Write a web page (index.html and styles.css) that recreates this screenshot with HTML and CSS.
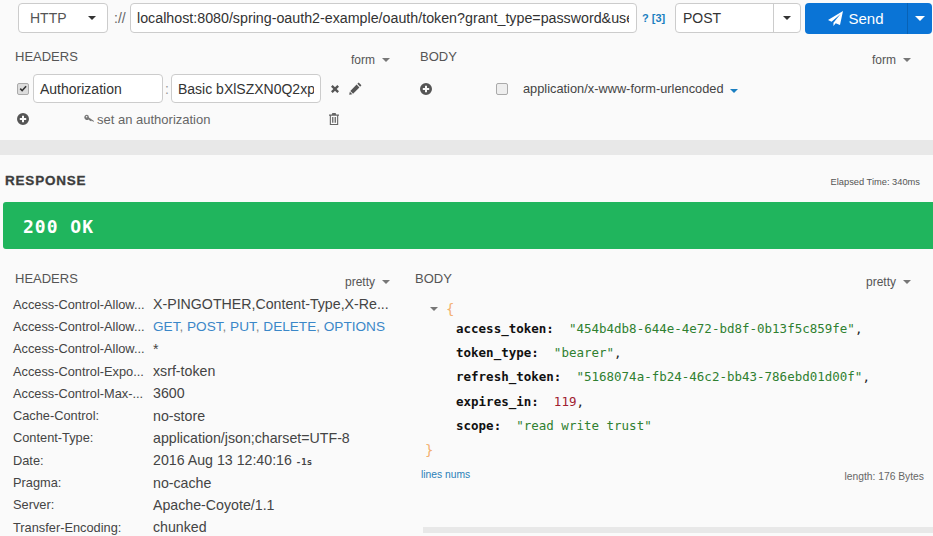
FILE: index.html
```html
<!DOCTYPE html>
<html lang="en">
  <head>
    <meta charset="UTF-8" />
    <meta name="viewport" content="width=device-width, initial-scale=1.0" />
    <title>REST Client</title>
    <link rel="stylesheet" href="styles.css">
  </head>
  <body>
    <section class="request">
      <div class="url-row">
        <div class="field scheme-select">HTTP<span class="caret caret-dark"></span></div>
        <span class="scheme-sep">://</span>
        <div class="field url-input"><span class="clip-text">localhost:8080/spring-oauth2-example/oauth/token?grant_type=password&amp;use</span></div>
        <a class="url-help">? [3]</a>
        <div class="field method-select">
          <span class="method-name">POST</span>
          <span class="method-toggle"><span class="caret caret-dark"></span></span>
        </div>
        <div class="send-button">
          <span class="send-main">
            <svg class="send-icon" viewBox="0 0 16 16"><path d="M16 0 12.8 15 8.2 13 5.8 16V12.6L13.4 3.2 3.8 11.4 0 9.6Z" /></svg>
            Send
          </span>
          <span class="send-toggle"><span class="caret caret-white"></span></span>
        </div>
      </div>

      <div class="request-panels">
        <div class="request-headers">
          <div class="panel-title">
            <h3 class="panel-heading">HEADERS</h3>
            <span class="panel-mode">form<span class="caret caret-gray"></span></span>
          </div>
          <div class="header-row">
            <span class="checkbox">
              <svg viewBox="0 0 12 12"><path d="M2 6.2 3.4 4.8 5 6.5 9 2 10.4 3.4 5 9.4Z" /></svg>
            </span>
            <div class="field header-name">Authorization</div>
            <span class="header-colon">:</span>
            <div class="field header-value"><span class="clip-text">Basic bXlSZXN0Q2xp</span></div>
            <svg class="icon icon-remove" viewBox="0 0 12 12"><path d="M3.2 1.2 6 4 8.8 1.2 10.8 3.2 8 6 10.8 8.8 8.8 10.8 6 8 3.2 10.8 1.2 8.8 4 6 1.2 3.2Z" /></svg>
            <svg class="icon icon-edit" viewBox="0 0 14 14"><path d="M10.4.6 13.4 3.6 12 5 9 2ZM8.2 2.8 11.2 5.8 4.4 12.6 1.4 9.6ZM.9 10.4 3.6 13.1.2 13.8Z" /></svg>
          </div>
          <div class="auth-row">
            <svg class="icon icon-add" viewBox="0 0 12 12"><path fill-rule="evenodd" d="M6 0a6 6 0 1 0 0 12A6 6 0 0 0 6 0ZM5 2.8H7V5H9.2V7H7V9.2H5V7H2.8V5H5Z" /></svg>
            <span class="auth-link">
              <svg class="icon-key" viewBox="0 0 10 10"><path fill-rule="evenodd" d="M3 .8a2.6 2.6 0 1 0 1.6 4.6L6.4 7.2 7.2 6.6 8 7.6 8.8 7 9.6 8 10 7 4.9 3.6A2.6 2.6 0 0 0 3 .8ZM2.6 2a.8.8 0 1 1 0 1.6.8.8 0 0 1 0-1.6Z" /></svg>
              set an authorization
            </span>
            <svg class="icon icon-trash" viewBox="0 0 10 12"><path fill-rule="evenodd" d="M3.4 0H6.6L7.2 1.6H10V2.8H9.2V12H.8V2.8H0V1.6H2.8ZM1.9 2.8V10.9H8.1V2.8ZM3 4H3.9V9.8H3ZM4.6 4H5.4V9.8H4.6ZM6.1 4H7V9.8H6.1Z" /></svg>
          </div>
        </div>

        <div class="request-body">
          <div class="panel-title">
            <h3 class="panel-heading">BODY</h3>
            <span class="panel-mode">form<span class="caret caret-gray"></span></span>
          </div>
          <div class="body-row">
            <svg class="icon icon-add" viewBox="0 0 12 12"><path fill-rule="evenodd" d="M6 0a6 6 0 1 0 0 12A6 6 0 0 0 6 0ZM5 2.8H7V5H9.2V7H7V9.2H5V7H2.8V5H5Z" /></svg>
            <span class="checkbox checkbox-empty"></span>
            <span class="content-type">application/x-www-form-urlencoded<span class="caret caret-blue"></span></span>
          </div>
        </div>
      </div>
    </section>

    <section class="response">
      <div class="response-title">
        <h2 class="response-heading">RESPONSE</h2>
        <span class="elapsed">Elapsed Time: 340ms</span>
      </div>
      <div class="status-bar">200 OK</div>

      <div class="response-panels">
        <div class="response-headers">
          <div class="panel-title">
            <h3 class="panel-heading">HEADERS</h3>
            <span class="panel-mode">pretty<span class="caret caret-gray"></span></span>
          </div>
          <dl class="header-list">
            <dt>Access-Control-Allow...</dt><dd>X-PINGOTHER,Content-Type,X-Re...</dd>
            <dt>Access-Control-Allow...</dt><dd class="methods"><a>GET</a>, <a>POST</a>, <a>PUT</a>, <a>DELETE</a>, <a>OPTIONS</a></dd>
            <dt>Access-Control-Allow...</dt><dd>*</dd>
            <dt>Access-Control-Expo...</dt><dd>xsrf-token</dd>
            <dt>Access-Control-Max-...</dt><dd>3600</dd>
            <dt>Cache-Control:</dt><dd>no-store</dd>
            <dt>Content-Type:</dt><dd>application/json;charset=UTF-8</dd>
            <dt>Date:</dt><dd>2016 Aug 13 12:40:16 <small class="date-delta">-1s</small></dd>
            <dt>Pragma:</dt><dd>no-cache</dd>
            <dt>Server:</dt><dd>Apache-Coyote/1.1</dd>
            <dt>Transfer-Encoding:</dt><dd>chunked</dd>
          </dl>
        </div>

        <div class="response-body">
          <div class="panel-title">
            <h3 class="panel-heading">BODY</h3>
            <span class="panel-mode">pretty<span class="caret caret-gray"></span></span>
          </div>
          <div class="json">
            <div class="json-open"><span class="caret caret-gray"></span><span class="json-brace">{</span></div>
            <div class="json-line"><b>access_token:</b>  <span class="json-string">"454b4db8-644e-4e72-bd8f-0b13f5c859fe"</span>,</div>
            <div class="json-line"><b>token_type:</b>  <span class="json-string">"bearer"</span>,</div>
            <div class="json-line"><b>refresh_token:</b>  <span class="json-string">"5168074a-fb24-46c2-bb43-786ebd01d00f"</span>,</div>
            <div class="json-line"><b>expires_in:</b>  <span class="json-number">119</span>,</div>
            <div class="json-line"><b>scope:</b>  <span class="json-string">"read write trust"</span></div>
            <div class="json-close json-brace">}</div>
          </div>
          <div class="body-footer">
            <a class="lines-link">lines nums</a>
            <span class="body-length">length: 176 Bytes</span>
          </div>
          <div class="next-band"></div>
        </div>
      </div>
    </section>
  </body>
</html>
```

FILE: styles.css
```css
* {
  box-sizing: border-box;
}

body {
  margin: 0;
  height: 536px;
  overflow: hidden;
  background: #fafafa;
  color: #444;
  font-family: 'Liberation Sans', Arial, sans-serif;
  font-size: 14px;
}

.field {
  display: flex;
  align-items: center;
  background: #fff;
  border: 1px solid #ccc;
  border-radius: 4px;
  color: #333;
  overflow: hidden;
}

.clip-text {
  display: block;
  overflow: hidden;
  white-space: nowrap;
}

.caret {
  display: inline-block;
  width: 0;
  height: 0;
  border-left: 4px solid transparent;
  border-right: 4px solid transparent;
  border-top: 4px solid #777;
}

.caret-dark {
  border-top-color: #333;
}

.caret-white {
  border-left-width: 5px;
  border-right-width: 5px;
  border-top: 5px solid #fff;
}

.caret-blue {
  border-top-color: #1a7fc1;
  margin-left: 6px;
}

.caret-gray {
  margin-left: 7px;
  vertical-align: 2px;
}

.icon {
  fill: #555;
  flex: none;
}

/* request */
.request {
  height: 140px;
  padding-top: 3px;
}

.url-row {
  display: flex;
  align-items: center;
  height: 30px;
  padding-left: 18px;
}

.scheme-select {
  width: 90px;
  height: 30px;
  padding: 0 11px;
  justify-content: space-between;
  color: #555;
}

.scheme-sep {
  width: 22px;
  padding-left: 6px;
  color: #666;
}

.url-input {
  width: 507px;
  height: 30px;
  padding: 0 7px 0 6px;
  font-size: 14.25px;
}

.url-help {
  width: 38px;
  padding-left: 5px;
  color: #1a7fc1;
  font-size: 11px;
  font-weight: bold;
}

.method-select {
  width: 126px;
  height: 30px;
}

.method-name {
  flex: 1;
  padding-left: 7px;
}

.method-toggle {
  display: flex;
  align-items: center;
  justify-content: center;
  width: 27px;
  height: 100%;
  border-left: 1px solid #ccc;
}

.send-button {
  display: flex;
  width: 127px;
  height: 31px;
  margin-left: 4px;
  background: #0a74d6;
  border-radius: 4px;
  color: #fff;
  font-size: 15px;
}

.send-main {
  display: flex;
  flex: 1;
  align-items: center;
  justify-content: center;
  gap: 5px;
}

.send-icon {
  width: 15px;
  height: 15px;
  fill: #fff;
}

.send-toggle {
  display: flex;
  align-items: center;
  justify-content: center;
  width: 25px;
  border-left: 1px solid #0862b6;
}

.request-panels {
  display: grid;
  grid-template-columns: 375px 491px;
  column-gap: 30px;
  padding: 14px 0 0 15px;
}

.panel-title {
  display: flex;
  justify-content: space-between;
  align-items: flex-end;
  height: 20px;
}

.panel-heading {
  margin: 0;
  font-size: 13px;
  font-weight: normal;
  color: #555;
  line-height: 20px;
  align-self: flex-start;
}

.panel-mode {
  font-size: 12px;
  color: #555;
}

.header-row {
  display: flex;
  align-items: center;
  height: 29px;
  margin-top: 7px;
}

.checkbox {
  display: flex;
  align-items: center;
  justify-content: center;
  width: 12px;
  height: 12px;
  margin-left: 2px;
  background: #ddd;
  border: 1px solid #aaa;
  border-radius: 2px;
}

.checkbox svg {
  width: 10px;
  height: 10px;
  flex: none;
  fill: #333;
}

.header-name {
  width: 130px;
  height: 29px;
  margin-left: 4px;
  padding-left: 6px;
}

.header-colon {
  width: 8px;
  text-align: center;
  color: #999;
}

.header-value {
  width: 150px;
  height: 29px;
  padding: 0 6px;
}

.icon-remove {
  width: 10px;
  height: 10px;
  margin-left: 9px;
}

.icon-edit {
  width: 13px;
  height: 13px;
  margin-left: 9px;
}

.auth-row {
  display: flex;
  align-items: center;
  height: 16px;
  margin-top: 8px;
  padding-left: 2px;
}

.auth-row .icon-add,
.body-row .icon-add {
  width: 12px;
  height: 12px;
}

.auth-link {
  display: flex;
  align-items: center;
  gap: 3px;
  width: 245px;
  margin-left: 55px;
  font-size: 13px;
  color: #666;
}

.icon-key {
  width: 10px;
  height: 10px;
  fill: #777;
}

.icon-trash {
  width: 10px;
  height: 12px;
  fill: #666;
}

.body-row {
  display: flex;
  align-items: center;
  height: 29px;
  margin-top: 7px;
}

.body-row .checkbox-empty {
  margin-left: 64px;
  background: #eee;
}

.content-type {
  margin-left: 15px;
  font-size: 12.8px;
  color: #444;
}

/* response */
.response {
  border-top: 15px solid #e8e8e8;
}

.response-title {
  display: flex;
  justify-content: space-between;
  align-items: flex-end;
  height: 36px;
  padding: 0 13px 0 5px;
}

.response-heading {
  margin: 0;
  font-size: 13.5px;
  line-height: 20px;
  letter-spacing: 0.8px;
  color: #3d3d3d;
  -webkit-text-stroke: 0.3px #3d3d3d;
}

.elapsed {
  font-size: 9.3px;
  line-height: 17px;
  color: #555;
}

.status-bar {
  display: flex;
  align-items: center;
  height: 47px;
  margin: 11px 0 0 3px;
  padding: 2px 0 0 20px;
  background: #20b55d;
  border-radius: 3px 0 0 3px;
  color: #fff;
  font-family: 'DejaVu Sans Mono', monospace;
  font-size: 18px;
  font-weight: bold;
  letter-spacing: 1px;
}

.response-panels {
  display: grid;
  grid-template-columns: 375px 496px;
  column-gap: 25px;
  padding: 20px 0 0 15px;
}

.response-headers .panel-title {
  margin-bottom: 4px;
}

.header-list {
  display: grid;
  grid-template-columns: 140px 1fr;
  grid-auto-rows: 22.3px;
  align-items: center;
  margin: 0 0 0 -2px;
}

.header-list dt {
  font-size: 12.8px;
  color: #444;
}

.header-list dd {
  margin: 0;
  font-size: 14.2px;
  color: #444;
}

.header-list .methods {
  color: #888;
  font-size: 13.6px;
}

.methods a {
  color: #3a87c8;
}

.date-delta {
  font-family: 'DejaVu Sans Mono', monospace;
  font-size: 9px;
  font-weight: bold;
}

.json {
  margin: 12px 0 0 0;
  font-family: 'DejaVu Sans Mono', monospace;
  font-size: 12.5px;
  color: #222;
}

.json-open {
  display: flex;
  align-items: center;
  gap: 8px;
  height: 16px;
  padding-left: 15px;
}

.json-open .caret {
  margin: 0;
}

.json-brace {
  color: #f3b070;
  font-size: 14px;
}

.json-line {
  height: 24.2px;
  line-height: 24px;
  padding-left: 41px;
  white-space: pre;
}

.json-line b {
  color: #111;
}

.json-string {
  color: #2f8030;
}

.json-number {
  color: #a02030;
}

.json-close {
  height: 20px;
  line-height: 20px;
  margin-top: 2px;
  padding-left: 10px;
}

.body-footer {
  display: flex;
  justify-content: space-between;
  align-items: flex-end;
  height: 20px;
  padding: 0 0 0 6px;
  margin-right: -13px;
  font-size: 10.3px;
}

.lines-link {
  color: #2a7fb8;
}

.body-length {
  color: #666;
  position: relative;
  top: 2px;
}

.next-band {
  height: 6px;
  margin: 47px -30px 0 8px;
  background: #e8e8e8;
}
```
